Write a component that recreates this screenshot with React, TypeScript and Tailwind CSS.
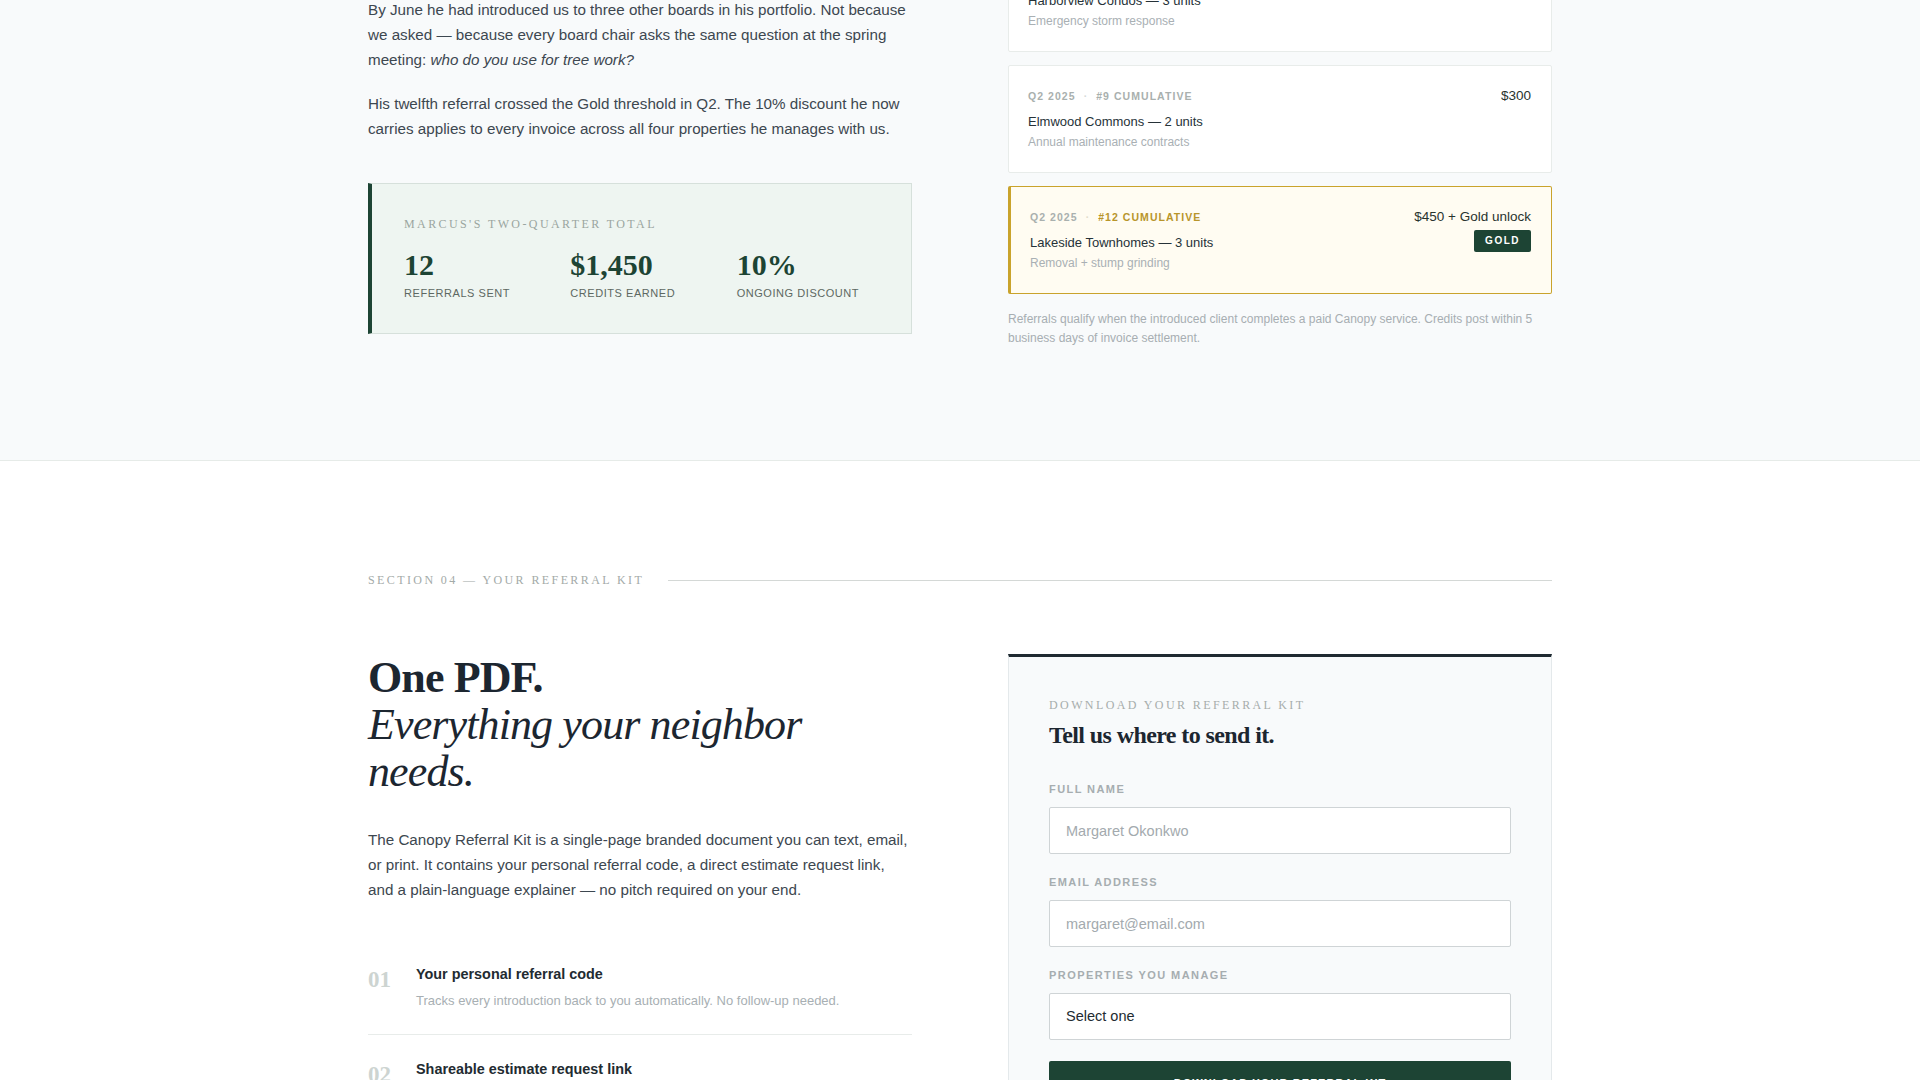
import React from "react";

const sans = "font-['Liberation_Sans',Arial,sans-serif]";
const serif = "font-['Liberation_Serif','Times_New_Roman',serif]";

interface Referral {
  quarter: string;
  rank: string;
  name: string;
  note: string;
  amount: string;
}

const referrals: Referral[] = [
  {
    quarter: "Q1 2025",
    rank: "#6 cumulative",
    name: "Harborview Condos — 3 units",
    note: "Emergency storm response",
    amount: "$450",
  },
  {
    quarter: "Q2 2025",
    rank: "#9 cumulative",
    name: "Elmwood Commons — 2 units",
    note: "Annual maintenance contracts",
    amount: "$300",
  },
];

const stats = [
  { value: "12", label: "Referrals sent" },
  { value: "$1,450", label: "Credits earned" },
  { value: "10%", label: "Ongoing discount" },
];

const kitItems = [
  {
    num: "01",
    title: "Your personal referral code",
    body: "Tracks every introduction back to you automatically. No follow-up needed.",
  },
  {
    num: "02",
    title: "Shareable estimate request link",
    body: "Neighbors book a free site walk in under a minute, code already applied.",
  },
  {
    num: "03",
    title: "Plain-language explainer",
    body: "What we do, how pricing works, and what their first visit looks like.",
  },
];

function ReferralCard({ quarter, rank, name, note, amount }: Referral) {
  return (
    <div className="flex justify-between rounded-[2px] border border-[#e8ecea] bg-white py-[22px] pl-[19px] pr-5">
      <div>
        <div className="flex items-center text-[10.5px] font-bold uppercase leading-4 tracking-[0.1em] text-[#a9b0ae]">
          <span>{quarter}</span>
          <span className="mx-2 text-[#d6dbd9]">·</span>
          <span>{rank}</span>
        </div>
        <p className="mt-2 text-[13px] leading-5 text-[#263238]">{name}</p>
        <p className="mt-0.5 text-[12px] leading-4 text-[#a9b0b4]">{note}</p>
      </div>
      <div className="text-[13.5px] leading-4 text-[#28332e]">{amount}</div>
    </div>
  );
}

function Field({ label, children }: { label: string; children: React.ReactNode }) {
  return (
    <div className="mt-5 first:mt-[31px]">
      <label className="block text-[11px] font-bold uppercase leading-4 tracking-[0.13em] text-[#a6adb0]">
        {label}
      </label>
      <div className="mt-2.5">{children}</div>
    </div>
  );
}

export default function App() {
  return (
    <div className={`${sans} min-h-screen w-full bg-white`}>
      {/* story + referral ledger */}
      <section className="-mt-[56px] border-b border-[#e6ebe8] bg-[#f8fafb] pb-28">
        <div className="mx-auto grid max-w-[1184px] grid-cols-2 gap-24">
          <div className="pt-[53px]">
            <p className="mb-[19px] text-[15.2px] leading-[25px] text-[#3d4750]">
              By June he had introduced us to three other boards in his portfolio. Not because we asked —
              because every board chair asks the same question at the spring meeting:{" "}
              <em>who do you use for tree work?</em>
            </p>
            <p className="text-[15.2px] leading-[25px] text-[#3d4750]">
              His twelfth referral crossed the Gold threshold in Q2. The 10% discount he now carries applies
              to every invoice across all four properties he manages with us.
            </p>

            <div className="mt-[42px] border border-l-4 border-[#d6e0db] border-l-[#1d4434] bg-[#eef5f1] pb-8 pl-8 pr-8 pt-8">
              <div className={`${serif} text-[12px] uppercase leading-4 tracking-[0.2em] text-[#9aa5a0]`}>
                Marcus's two-quarter total
              </div>
              <div className="mt-4 grid grid-cols-3 gap-6">
                {stats.map((s) => (
                  <div key={s.label}>
                    <div className={`${serif} text-[30px] font-bold leading-[33px] text-[#1d4434]`}>{s.value}</div>
                    <div className="mt-1 text-[11px] uppercase leading-4 tracking-[0.05em] text-[#5d6862]">
                      {s.label}
                    </div>
                  </div>
                ))}
              </div>
            </div>
          </div>

          <div>
            <div className="flex flex-col gap-[13px]">
              {referrals.map((r) => (
                <ReferralCard key={r.name} {...r} />
              ))}

              <div className="flex justify-between rounded-[2px] border border-l-[3px] border-[#c9a32c] bg-[#fffcf2] py-[22px] pl-[19px] pr-5">
                <div>
                  <div className="flex items-center text-[10.5px] font-bold uppercase leading-4 tracking-[0.1em] text-[#a9b0ae]">
                    <span>Q2 2025</span>
                    <span className="mx-2 text-[#e2dccb]">·</span>
                    <span className="text-[#b8952b]">#12 cumulative</span>
                  </div>
                  <p className="mt-2 text-[13px] leading-5 text-[#263238]">Lakeside Townhomes — 3 units</p>
                  <p className="mt-0.5 text-[12px] leading-4 text-[#a9b0b4]">Removal + stump grinding</p>
                </div>
                <div className="flex flex-col items-end">
                  <div className="text-[13.5px] leading-4 text-[#28332e]">$450 + Gold unlock</div>
                  <span className="mt-[5px] rounded-[2px] bg-[#1d4434] px-[11px] py-1 text-[10px] font-bold leading-[14px] tracking-[0.15em] text-white">
                    GOLD
                  </span>
                </div>
              </div>
            </div>

            <p className="mt-4 text-[12px] leading-[19px] text-[#a7aeb2]">
              Referrals qualify when the introduced client completes a paid Canopy service. Credits post within
              5 business days of invoice settlement.
            </p>
          </div>
        </div>
      </section>

      {/* section 04: referral kit */}
      <section className="bg-white pb-24 pt-[111px]">
        <div className="mx-auto max-w-[1184px]">
          <div className="mb-[66px] flex items-center gap-6">
            <span className={`${serif} whitespace-nowrap text-[12px] uppercase leading-4 tracking-[0.2em] text-[#a3aaa8]`}>
              Section 04 — Your referral kit
            </span>
            <div className="h-px flex-1 bg-[#d4d8d6]" />
          </div>

          <div className="grid grid-cols-2 gap-24">
            <div>
              <h2 className={`${serif} text-[44px] leading-[47px] tracking-[-0.02em] text-[#1c2630]`}>
                <span className="font-bold">One PDF.</span>
                <br />
                <em className="font-normal">Everything your neighbor needs.</em>
              </h2>
              <p className="mt-8 text-[15.2px] leading-[25px] text-[#3d4750]">
                The Canopy Referral Kit is a single-page branded document you can text, email, or print. It
                contains your personal referral code, a direct estimate request link, and a plain-language
                explainer — no pitch required on your end.
              </p>

              <ul className="mt-[38px]">
                {kitItems.map((item) => (
                  <li key={item.num} className="flex border-b border-[#e8ecea] py-6 last:border-b-0">
                    <span className={`${serif} w-12 shrink-0 pt-1 text-[23px] font-bold leading-none text-[#cdd4d1]`}>
                      {item.num}
                    </span>
                    <div>
                      <div className="text-[14.4px] font-bold leading-5 text-[#222b31]">{item.title}</div>
                      <div className="mt-2 text-[13px] leading-[18px] text-[#a8afb3]">{item.body}</div>
                    </div>
                  </li>
                ))}
              </ul>
            </div>

            <div className="self-start border border-t-[3px] border-[#e4e9eb] border-t-[#1f2a31] bg-[#f8fafb] px-10 pb-10 pt-10">
              <div className={`${serif} text-[12px] uppercase leading-4 tracking-[0.2em] text-[#a6adab]`}>
                Download your referral kit
              </div>
              <h3 className={`${serif} mt-[7px] text-[24px] font-bold leading-[30px] tracking-[-0.025em] text-[#1c2630]`}>
                Tell us where to send it.
              </h3>

              <form onSubmit={(e) => e.preventDefault()}>
                <Field label="Full name">
                  <input
                    type="text"
                    placeholder="Margaret Okonkwo"
                    className="h-[47px] w-full rounded-[2px] border border-[#cfd4d6] bg-white px-4 text-[14.5px] text-[#222b31] placeholder:text-[#a3aaae] focus:outline-none"
                  />
                </Field>
                <Field label="Email address">
                  <input
                    type="email"
                    placeholder="margaret@email.com"
                    className="h-[47px] w-full rounded-[2px] border border-[#cfd4d6] bg-white px-4 text-[14.5px] text-[#222b31] placeholder:text-[#a3aaae] focus:outline-none"
                  />
                </Field>
                <Field label="Properties you manage">
                  <select
                    defaultValue=""
                    className="h-[47px] w-full appearance-none rounded-[2px] border border-[#cfd4d6] bg-white px-4 text-[14.5px] text-[#222b31] focus:outline-none"
                  >
                    <option value="">Select one</option>
                    <option>1–2 properties</option>
                    <option>3–5 properties</option>
                    <option>6+ properties</option>
                  </select>
                </Field>
                <button
                  type="submit"
                  className="mt-[21px] w-full rounded-[2px] bg-[#1d4434] py-[14px] text-[11px] font-bold uppercase leading-4 tracking-[0.1em] text-white"
                >
                  Download your referral kit
                </button>
              </form>
            </div>
          </div>
        </div>
      </section>
    </div>
  );
}
